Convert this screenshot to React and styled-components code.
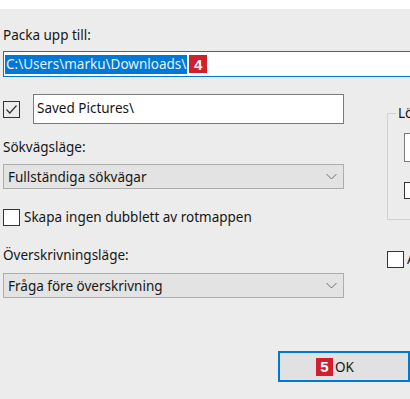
import React from 'react';
import styled, { createGlobalStyle } from 'styled-components';

const Global = createGlobalStyle`
  html, body { margin: 0; padding: 0; }
  body {
    background: #ececec;
    font-family: "Noto Sans", "Open Sans", sans-serif;
    font-size: 13.5px;
    color: #161616;
  }
`;

const Page = styled.div`
  width: 410px;
  height: 399px;
  overflow: hidden;
  background: #ececec;
`;

const TitleStrip = styled.div`
  height: 9px;
  background: #ffffff;
`;

const Body = styled.div`
  padding: 16px 0 0 3px;
`;

const Label = styled.div`
  height: 20px;
  line-height: 20px;
  white-space: nowrap;
  margin-top: ${p => p.$top || 0}px;
`;

const PathField = styled.div`
  margin-top: ${p => p.$top || 0}px;
  height: 24px;
  border: 1px solid #0078d7;
  background: #fff;
  display: flex;
  align-items: center;
  padding-left: 1px;
  gap: 2px;
  width: 420px;
`;

const Selected = styled.span`
  background: #0078d7;
  color: #e9f1fb;
  height: 19px;
  line-height: 19px;
  padding: 0 1px;
  white-space: nowrap;
`;

const Badge = styled.span`
  background: #d0202e;
  color: #fff;
  font-family: "Liberation Sans", Arial, sans-serif;
  font-weight: 700;
  font-size: 15px;
  width: ${p => p.$w || 18}px;
  height: ${p => p.$h || 18}px;
  display: inline-flex;
  align-items: center;
  justify-content: center;
`;

const Columns = styled.div`
  display: flex;
  margin-top: 17px;
`;

const Left = styled.div`
  width: 341px;
  flex: none;
  display: flex;
  flex-direction: column;
`;

const Right = styled.div`
  margin-left: 43px;
  flex: none;
  width: 60px;
  display: flex;
  flex-direction: column;
`;

const CheckRow = styled.div`
  display: flex;
  align-items: center;
  gap: ${p => p.$gap || 4}px;
  margin-top: ${p => p.$top || 0}px;
  white-space: nowrap;
`;

const Box = styled.span`
  width: 15px;
  height: 15px;
  border: 1px solid #333;
  background: ${p => (p.$checked ? 'transparent' : '#fff')};
  flex: none;
  display: flex;
  align-items: center;
  justify-content: center;
`;

const TextInput = styled.div`
  flex: 1;
  height: 30px;
  border: 1px solid #7a7a7a;
  background: #fff;
  box-sizing: border-box;
  line-height: 26px;
  padding-left: 3px;
`;

const Select = styled.div`
  margin-top: ${p => p.$top || 0}px;
  height: 25px;
  box-sizing: border-box;
  border: 1px solid #adadad;
  background: #e3e3e3;
  display: flex;
  align-items: center;
  justify-content: space-between;
  padding: 0 6px 0 4px;
`;

const Group = styled.div`
  margin-top: 19px;
  height: 107px;
  box-sizing: border-box;
  border: 1px solid #d2d2d2;
  border-right: none;
  position: relative;
  padding: 19px 0 0 16px;
`;

const Legend = styled.span`
  position: absolute;
  top: -11px;
  left: 8px;
  background: #ececec;
  padding: 0 2px;
  line-height: 20px;
`;

const InnerField = styled.div`
  height: 29px;
  border: 1px solid #7a7a7a;
  border-right: none;
  background: #fff;
  box-sizing: border-box;
`;

const Footer = styled.div`
  display: flex;
  padding-left: 275px;
  margin-top: 53px;
`;

const OkButton = styled.div`
  width: 140px;
  height: 31px;
  box-sizing: border-box;
  border: 2px solid #0078d7;
  background: #e1e1e1;
  display: flex;
  align-items: center;
  padding-left: 36px;
  gap: 2px;
`;

const Chevron = () => (
  <svg width="11" height="7" viewBox="0 0 11 7">
    <path d="M0.5 1 L5.5 6 L10.5 1" fill="none" stroke="#6f6f6f" strokeWidth="1" />
  </svg>
);

const Check = () => (
  <svg width="13" height="11" viewBox="0 0 13 11">
    <path d="M1.5 5.5 L4.8 9 L11.5 1.5" fill="none" stroke="#333" strokeWidth="1.2" />
  </svg>
);

export default function App() {
  return (
    <Page>
      <Global />
      <TitleStrip />
      <Body>
        <Label>Packa upp till:</Label>
        <PathField $top={6}>
          <Selected>C:\Users\marku\Downloads\</Selected>
          <Badge>4</Badge>
        </PathField>
        <Columns>
          <Left>
            <CheckRow $gap={13}>
              <Box $checked><Check /></Box>
              <TextInput>Saved Pictures\</TextInput>
            </CheckRow>
            <Label $top={13}>Sökvägsläge:</Label>
            <Select $top={7}>
              <span>Fullständiga sökvägar</span>
              <Chevron />
            </Select>
            <CheckRow $top={19}>
              <Box />
              <span>Skapa ingen dubblett av rotmappen</span>
            </CheckRow>
            <Label $top={19}>Överskrivningsläge:</Label>
            <Select $top={8}>
              <span>Fråga före överskrivning</span>
              <Chevron />
            </Select>
          </Left>
          <Right>
            <Group>
              <Legend>Lö</Legend>
              <InnerField />
              <CheckRow $top={20}>
                <Box />
              </CheckRow>
            </Group>
            <CheckRow $top={30} $gap={3}>
              <Box />
              <span>A</span>
            </CheckRow>
          </Right>
        </Columns>
        <Footer>
          <OkButton>
            <Badge $w={17} $h={18}>5</Badge>
            <span>OK</span>
          </OkButton>
        </Footer>
      </Body>
    </Page>
  );
}
